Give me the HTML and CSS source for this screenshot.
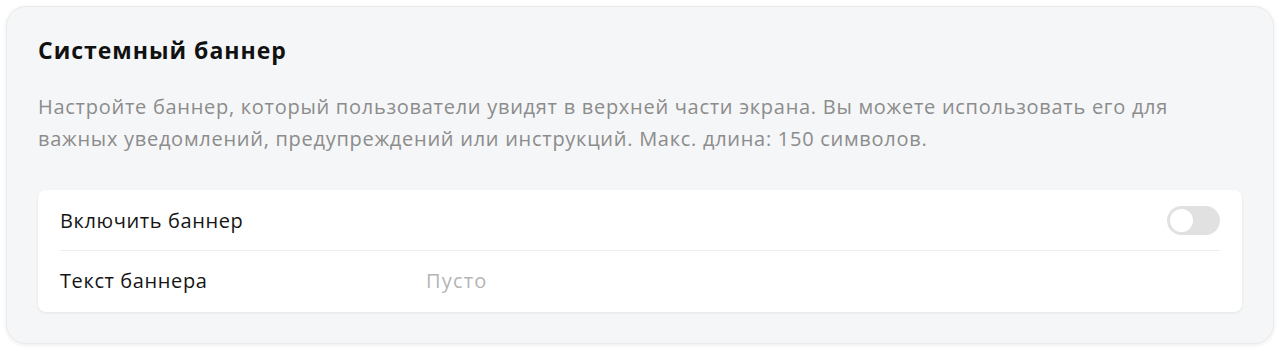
FILE: index.html
```html
<!DOCTYPE html>
<html lang="ru">
<head>
  <meta charset="UTF-8">
  <meta name="viewport" content="width=device-width, initial-scale=1.0">
  <title>Системный баннер</title>
  <link rel="stylesheet" href="styles.css">
</head>
<body>
  <div class="panel">
    <h2 class="panel-title">Системный баннер</h2>
    <p class="panel-desc">Настройте баннер, который пользователи увидят в верхней части экрана. Вы можете использовать его для важных уведомлений, предупреждений или инструкций. Макс. длина: 150 символов.</p>

    <div class="settings">
      <div class="setting-row">
        <div class="setting-label">Включить баннер</div>
        <div class="toggle"><span class="knob"></span></div>
      </div>
      <div class="setting-row">
        <div class="setting-label">Текст баннера</div>
        <div class="setting-value empty">Пусто</div>
      </div>
    </div>
  </div>
</body>
</html>
```

FILE: styles.css
```css
* {
  margin: 0;
  padding: 0;
  box-sizing: border-box;
  font-family: 'Open Sans', 'Noto Sans', sans-serif;
}
body {
  background: #ffffff;
  padding: 6px;
  color: #111;
}
.panel {
  background: #f5f6f7;
  border: 1px solid #ebebeb;
  border-radius: 20px;
  box-shadow: 0 1px 4px rgba(0, 0, 0, 0.08);
  padding: 27px 31px 31px 31px;
  height: 338px;
}
.panel-title {
  font-size: 23px;
  font-weight: 700;
  letter-spacing: 1px;
  line-height: 32px;
  color: #111;
  margin-bottom: 25px;
}
.panel-desc {
  font-size: 20px;
  letter-spacing: 0.72px;
  line-height: 32px;
  color: #8c8c8c;
  max-width: 1150px;
  margin-bottom: 35px;
}
.settings {
  background: #ffffff;
  border-radius: 8px;
  box-shadow: 0 1px 3px rgba(0, 0, 0, 0.08);
  padding: 0 22px;
}
.setting-row {
  display: flex;
  align-items: center;
  height: 60px;
}
.setting-row + .setting-row {
  height: 62px;
  padding-bottom: 3px;
  border-top: 1px solid #ececec;
}
.setting-label {
  width: 366px;
  font-size: 20px;
  letter-spacing: 0.6px;
  color: #151515;
}
.setting-value.empty {
  font-size: 20px;
  letter-spacing: 1.2px;
  color: #b5b5b5;
}
.toggle {
  margin-left: auto;
  width: 53px;
  height: 29px;
  border-radius: 15px;
  background: #e1e1e1;
  display: flex;
  align-items: center;
  padding: 0 3px;
}
.knob {
  width: 23px;
  height: 23px;
  border-radius: 50%;
  background: #ffffff;
}
```
